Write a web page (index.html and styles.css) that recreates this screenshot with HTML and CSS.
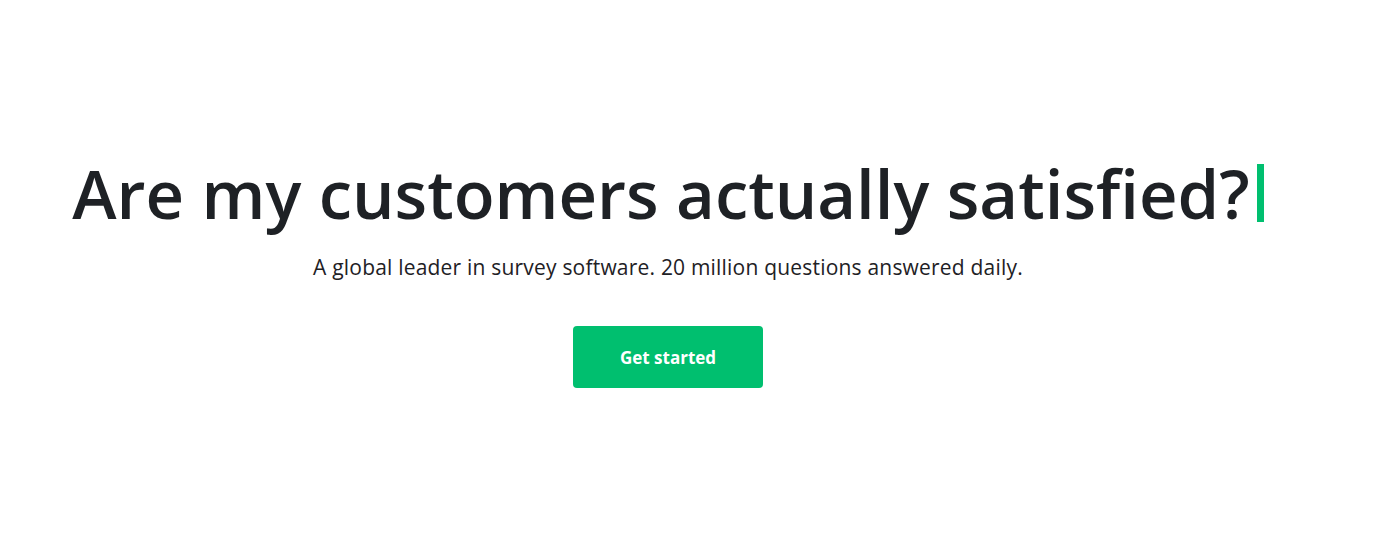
FILE: index.html
```html
<!DOCTYPE html>
<html lang="en">
<head>
<meta charset="utf-8">
<title>SurveyMonkey</title>
<link rel="stylesheet" href="styles.css">
</head>
<body>
<main class="hero">
  <h1 class="headline">Are my customers actually satisfied?<span class="cursor"></span></h1>
  <p class="subtitle">A global leader in survey software. 20 million questions answered daily.</p>
  <a class="cta" href="#">Get started</a>
</main>
</body>
</html>
```
FILE: styles.css
```css
html, body {
  margin: 0;
  padding: 0;
  background: #ffffff;
}
body {
  font-family: "Open Sans", "Noto Sans", sans-serif;
  color: #1e2125;
}
.hero {
  display: flex;
  flex-direction: column;
  align-items: center;
  padding: 148px 49px 0 0;
}
.headline {
  margin: 0;
  font-size: 67px;
  font-weight: 600;
  line-height: 90px;
  letter-spacing: 0;
  white-space: nowrap;
  display: flex;
  align-items: center;
}
.cursor {
  display: inline-block;
  width: 7px;
  height: 58px;
  background: #00bf6f;
  margin-left: 7px;
}
.subtitle {
  margin: 15px 0 0;
  font-size: 21px;
  line-height: 28px;
  letter-spacing: 0.2px;
  font-weight: 400;
}
.cta {
  margin-top: 45px;
  display: flex;
  align-items: center;
  justify-content: center;
  width: 190px;
  height: 62px;
  border-radius: 4px;
  background: #00bf6f;
  color: #ffffff;
  font-weight: 700;
  font-size: 17px;
  text-decoration: none;
}
```
